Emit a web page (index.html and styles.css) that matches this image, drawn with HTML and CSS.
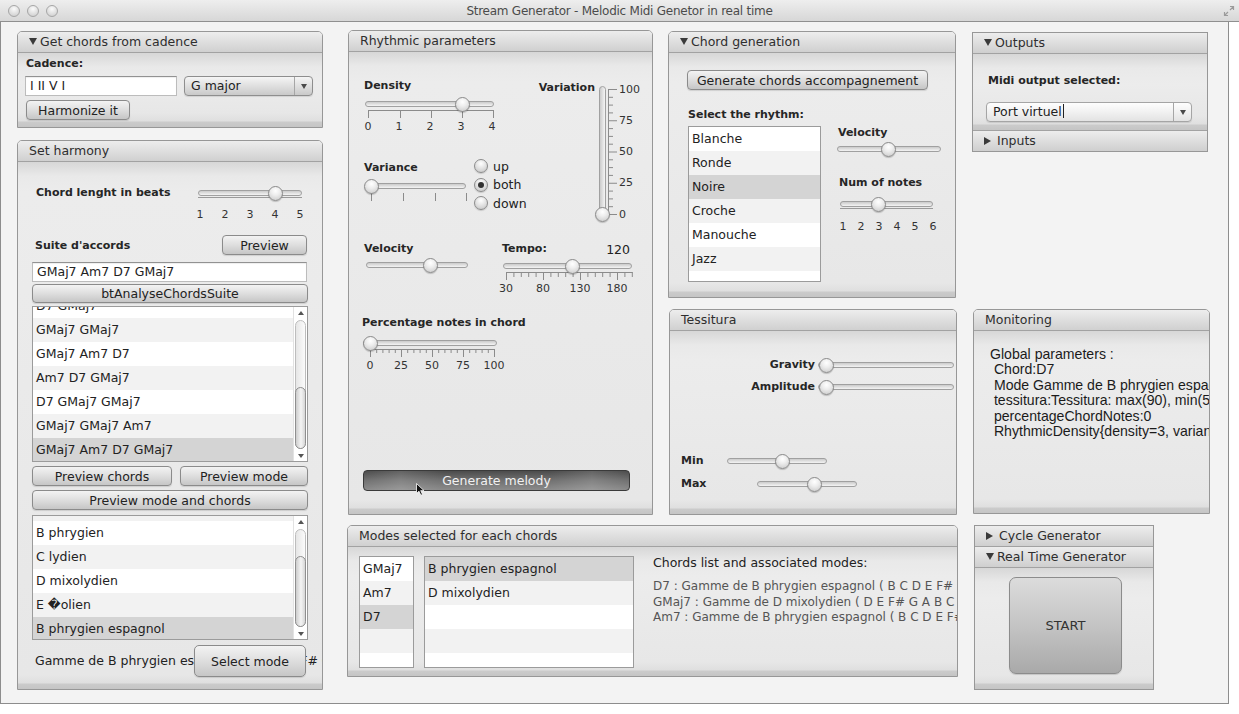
FILE: index.html
```html
<!DOCTYPE html>
<html>
<head>
<meta charset="utf-8">
<title>Stream Generator</title>
<link rel="stylesheet" href="styles.css">
</head>
<body>
<div class="titlebar">
  <div class="lights"><span class="light"></span><span class="light"></span><span class="light"></span></div>
  <div class="title">Stream Generator - Melodic Midi Genetor in real time</div>
  <div class="fs"><svg width="12" height="12" viewBox="0 0 12 12"><path d="M7 1.5h3.5V5M10.5 1.5L7 5M5 10.5H1.5V7M1.5 10.5L5 7" fill="none" stroke="#9b9b9b" stroke-width="1.2"/></svg></div>
</div>
<div class="window">
  <!-- column 1 -->
  <div class="col col1">
    <div class="panel p-cadence">
      <div class="phead"><span class="tri-down"></span>Get chords from cadence</div>
      <div class="pbody">
        <div class="lbl cad-lbl">Cadence:</div>
        <div class="cad-row">
          <div class="field cad-field">I II V I</div>
          <div class="combo cad-combo"><span class="combo-text">G major</span><span class="combo-arrow"><i></i></span></div>
        </div>
        <div class="btn btn-harm">Harmonize it</div>
      </div>
    </div>
    <div class="panel p-harmony">
      <div class="phead">Set harmony</div>
      <div class="pbody">
        <div class="harm-row1">
          <div class="lbl harm-lbl1">Chord lenght in beats</div>
          <div class="slider s-chordlen"><div class="track"></div><div class="subline"></div><div class="thumb" style="left:69.5px"></div></div>
        </div>
        <div class="tl tl-chordlen"><span>1</span><span>2</span><span>3</span><span>4</span><span>5</span></div>
        <div class="harm-row3">
          <div class="lbl suite-lbl">Suite d'accords</div>
          <div class="btn btn-preview">Preview</div>
        </div>
        <div class="field harm-field">GMaj7 Am7 D7 GMaj7</div>
        <div class="btn btn-analyse">btAnalyseChordsSuite</div>
        <div class="list list-suite">
          <div class="rows">
            <div class="row partial1">D7 GMaj7</div>
            <div class="row alt">GMaj7 GMaj7</div>
            <div class="row">GMaj7 Am7 D7</div>
            <div class="row alt">Am7 D7 GMaj7</div>
            <div class="row">D7 GMaj7 GMaj7</div>
            <div class="row alt">GMaj7 GMaj7 Am7</div>
            <div class="row sel">GMaj7 Am7 D7 GMaj7</div>
          </div>
          <div class="vscroll"><div class="sc-up"><i></i></div><div class="sc-track track1"><div class="sc-thumb thumb1"></div></div><div class="sc-down"><i></i></div></div>
        </div>
        <div class="btn-row">
          <div class="btn btn-pc">Preview chords</div>
          <div class="btn btn-pm">Preview mode</div>
        </div>
        <div class="btn btn-pmc">Preview mode and chords</div>
        <div class="list list-modes">
          <div class="rows">
            <div class="row alt partial2"></div>
            <div class="row">B phrygien</div>
            <div class="row alt">C lydien</div>
            <div class="row">D mixolydien</div>
            <div class="row alt">E �olien</div>
            <div class="row sel">B phrygien espagnol</div>
          </div>
          <div class="vscroll"><div class="sc-up"><i></i></div><div class="sc-track track2"><div class="sc-thumb thumb2"></div></div><div class="sc-down"><i></i></div></div>
        </div>
        <div class="sel-row">
          <div class="sel-text">Gamme de B phrygien espagnol ( B C D E F# G A )</div>
          <div class="btn btn-selmode">Select mode</div>
        </div>
      </div>
    </div>
  </div>

  <!-- column 2 -->
  <div class="col col2">
    <div class="mid-top">
      <div class="panel p-rhythm">
        <div class="phead">Rhythmic parameters</div>
        <div class="pbody">
          <div class="rh-top">
            <div class="rh-left">
              <div class="lbl">Density</div>
              <div class="slider s-density"><div class="track"></div><div class="thumb" style="left:89.5px"></div></div>
              <svg class="ticks t-density" width="130" height="8"><path d="M3 0.5H129M3.5 0V8M35.5 0V8M66.5 0V8M97.5 0V8M128.5 0V8" stroke="#8b8b8b" stroke-width="1" fill="none"/></svg>
              <div class="tl tl-density"><span>0</span><span>1</span><span>2</span><span>3</span><span>4</span></div>
              <div class="var-row">
                <div class="var-col">
                  <div class="lbl">Variance</div>
                  <div class="slider s-variance"><div class="track"></div><div class="thumb" style="left:-1.5px"></div></div>
                  <svg class="ticks t-variance" width="103" height="8"><path d="M6.5 0V8M38.5 0V8M70.5 0V8M101.5 0V8" stroke="#8b8b8b" stroke-width="1" fill="none"/></svg>
                </div>
                <div class="radios">
                  <div class="radio-row"><span class="radio"></span><span>up</span></div>
                  <div class="radio-row"><span class="radio on"></span><span>both</span></div>
                  <div class="radio-row"><span class="radio"></span><span>down</span></div>
                </div>
              </div>
            </div>
            <div class="rh-right">
              <div class="lbl var-lbl">Variation</div>
              <div class="vslider"><div class="vtrack"></div><div class="thumb vthumb"></div></div>
              <svg class="vticks" width="11" height="133"><path d="M1.5 3V129M1 3.5H10M1 34.75H10M1 66H10M1 97.25H10M1 128.5H10M1 11.3H6M1 19.1H6M1 26.9H6M1 42.6H6M1 50.4H6M1 58.2H6M1 73.8H6M1 81.6H6M1 89.4H6M1 105.1H6M1 112.9H6M1 120.7H6" stroke="#8b8b8b" stroke-width="1" fill="none"/></svg>
              <div class="vlabels"><span>100</span><span>75</span><span>50</span><span>25</span><span>0</span></div>
            </div>
          </div>
          <div class="rh-b">
            <div class="vel-col">
              <div class="lbl">Velocity</div>
              <div class="slider s-rvel"><div class="track"></div><div class="thumb" style="left:56.5px"></div></div>
            </div>
            <div class="tempo-col">
              <div class="tempo-head"><span class="lbl">Tempo:</span><span class="tempo-val">120</span></div>
              <div class="slider s-tempo"><div class="track"></div><div class="thumb" style="left:61.5px"></div></div>
              <svg class="ticks t-tempo" width="131" height="8"><path d="M3.5 0.5H129.5M3.5 0V8M40.5 0V8M77.5 0V8M114.5 0V8M10.9 0V5M18.3 0V5M25.7 0V5M33.1 0V5M47.9 0V5M55.3 0V5M62.7 0V5M70.1 0V5M84.9 0V5M92.3 0V5M99.7 0V5M107.1 0V5M121.9 0V5M129.3 0V5" stroke="#8b8b8b" stroke-width="1" fill="none"/></svg>
              <div class="tl tl-tempo"><span>30</span><span>80</span><span>130</span><span>180</span></div>
            </div>
          </div>
          <div class="rh-c">
            <div class="lbl pct-lbl">Percentage notes in chord</div>
            <div class="slider s-pct"><div class="track"></div><div class="thumb" style="left:-0.5px"></div></div>
            <svg class="ticks t-pct" width="136" height="8"><path d="M7.5 0.5H131.5M7.5 0V8M38.5 0V8M69.5 0V8M100.5 0V8M131.5 0V8M13.7 0V4M19.9 0V4M26.1 0V4M32.3 0V4M44.7 0V4M50.9 0V4M57.1 0V4M63.3 0V4M75.7 0V4M81.9 0V4M88.1 0V4M94.3 0V4M106.7 0V4M112.9 0V4M119.1 0V4M125.3 0V4" stroke="#8b8b8b" stroke-width="1" fill="none"/></svg>
            <div class="tl tl-pct"><span>0</span><span>25</span><span>50</span><span>75</span><span>100</span></div>
          </div>
          <div class="btn-gen">Generate melody
            <svg class="cursor" width="9" height="13" viewBox="0 0 9 13"><path d="M0.5 0.5V10.5L3 8.2L4.8 12.2L6.5 11.5L4.7 7.6H8Z" fill="#111" stroke="#fff" stroke-width="0.8"/></svg>
          </div>
        </div>
      </div>
      <div class="mid-right">
        <div class="panel p-chordgen">
          <div class="phead"><span class="tri-down"></span>Chord generation</div>
          <div class="pbody">
            <div class="btn btn-genchords">Generate chords accompagnement</div>
            <div class="cg-row">
              <div class="cg-left">
                <div class="lbl">Select the rhythm:</div>
                <div class="list list-rhythm">
                  <div class="rows">
                    <div class="row">Blanche</div>
                    <div class="row alt">Ronde</div>
                    <div class="row sel">Noire</div>
                    <div class="row alt">Croche</div>
                    <div class="row">Manouche</div>
                    <div class="row alt">Jazz</div>
                    <div class="row"></div>
                  </div>
                </div>
              </div>
              <div class="cg-right">
                <div class="lbl cg-vel">Velocity</div>
                <div class="slider s-cvel"><div class="track"></div><div class="thumb" style="left:43.5px"></div></div>
                <div class="lbl cg-num">Num of notes</div>
                <div class="slider s-num"><div class="track"></div><div class="subline"></div><div class="thumb" style="left:30.5px"></div></div>
                <div class="tl tl-num"><span>1</span><span>2</span><span>3</span><span>4</span><span>5</span><span>6</span></div>
              </div>
            </div>
          </div>
        </div>
        <div class="panel p-tess">
          <div class="phead">Tessitura</div>
          <div class="pbody">
            <div class="tess-row tr1">
              <div class="lbl tess-lbl">Gravity</div>
              <div class="slider s-grav"><div class="track"></div><div class="thumb" style="left:0.5px"></div></div>
            </div>
            <div class="tess-row tr2">
              <div class="lbl tess-lbl">Amplitude</div>
              <div class="slider s-grav"><div class="track"></div><div class="thumb" style="left:0.5px"></div></div>
            </div>
            <div class="tess-row tr3">
              <div class="lbl min-lbl">Min</div>
              <div class="slider s-mm"><div class="track"></div><div class="thumb" style="left:47.5px"></div></div>
            </div>
            <div class="tess-row tr4">
              <div class="lbl max-lbl">Max</div>
              <div class="slider s-mm"><div class="track"></div><div class="thumb" style="left:49.5px"></div></div>
            </div>
          </div>
        </div>
      </div>
    </div>
    <div class="panel p-modes">
      <div class="phead">Modes selected for each chords</div>
      <div class="pbody">
        <div class="modes-row">
          <div class="list list-chords">
            <div class="rows">
              <div class="row">GMaj7</div>
              <div class="row alt">Am7</div>
              <div class="row sel">D7</div>
              <div class="row alt"></div>
              <div class="row"></div>
            </div>
          </div>
          <div class="list list-modesel">
            <div class="rows">
              <div class="row sel">B phrygien espagnol</div>
              <div class="row alt">D mixolydien</div>
              <div class="row"></div>
              <div class="row alt"></div>
              <div class="row"></div>
            </div>
          </div>
          <div class="modes-text">
            <div class="mt-title">Chords list and associated modes:</div>
            <div class="mt-lines">D7 : Gamme de B phrygien espagnol ( B C D E F# G A )<br>GMaj7 : Gamme de D mixolydien ( D E F# G A B C )<br>Am7 : Gamme de B phrygien espagnol ( B C D E F# G A )</div>
          </div>
        </div>
      </div>
    </div>
  </div>

  <!-- column 3 -->
  <div class="col col3">
    <div class="stack stack-out">
      <div class="shead"><span class="tri-down"></span>Outputs</div>
      <div class="sbody out-body">
        <div class="lbl out-lbl">Midi output selected:</div>
        <div class="combo light out-combo"><span class="combo-text">Port virtuel<span class="caret"></span></span><span class="combo-arrow"><i></i></span></div>
      </div>
      <div class="shead last"><span class="tri-right"></span>Inputs</div>
    </div>
    <div class="panel p-monitor">
      <div class="phead">Monitoring</div>
      <div class="pbody">
        <div class="mon-text">Global parameters :
 Chord:D7
 Mode Gamme de B phrygien espagnol ( B C D E F# G A )
 tessitura:Tessitura: max(90), min(50)
 percentageChordNotes:0
 RhythmicDensity{density=3, variance=0}</div>
      </div>
    </div>
    <div class="stack stack-cycle">
      <div class="shead"><span class="tri-right"></span>Cycle Generator</div>
      <div class="shead"><span class="tri-down"></span>Real Time Generator</div>
      <div class="sbody cyc-body">
        <div class="btn-start">START</div>
      </div>
    </div>
  </div>
</div>
</body>
</html>
```

FILE: styles.css
```css
*{box-sizing:border-box;margin:0;padding:0}
html,body{width:1239px;height:714px}
body{background:#fff;font-family:"DejaVu Sans","Liberation Sans",sans-serif;font-size:12.5px;color:#222;overflow:hidden}

/* title bar */
.titlebar{height:22px;display:grid;grid-template-columns:1fr auto 1fr;align-items:center;background:linear-gradient(#eeeeee,#d7d7d7);border-bottom:1px solid #8f8f8f}
.lights{display:flex;gap:7px;padding-left:8px}
.light{width:12px;height:12px;border-radius:50%;border:1px solid #a6a6a6;background:radial-gradient(circle at 50% 30%,#fbfbfb,#d8d8d8 70%,#c8c8c8)}
.title{font-size:12px;letter-spacing:-0.25px;color:#4b4b4b;white-space:nowrap}
.fs{justify-self:end;margin-right:4px;display:flex}

/* window */
.window{width:1229px;height:682px;background:#f3f3f3;border:1px solid #8d8d8d;border-top:0;display:flex;align-items:flex-start}
.col{display:flex;flex-direction:column;flex:none}
.col1{margin-left:16px;width:306px}
.col2{margin-left:24px;width:611px}
.col3{margin-left:13px;width:240px}

/* panels */
.panel{border:1px solid #979797;border-radius:5px 5px 0 0;display:flex;flex-direction:column;overflow:hidden;flex:none}
.phead{height:21px;flex:none;background:linear-gradient(#ededed,#d0d0d0);border-bottom:1px solid #a2a2a2;line-height:20px;padding-left:11px;color:#2e2e2e;white-space:nowrap}
.pbody,.sbody{flex:1;min-height:0;display:flex;flex-direction:column;position:relative;background:linear-gradient(#d7d7d7 0,#e9e9e9 14px,#ececec 30px,#e7e7e7 calc(100% - 14px),#dfdfdf calc(100% - 6px),#cbcbcb calc(100% - 5px),#c5c5c5 100%)}
.tri-down{display:inline-block;width:0;height:0;border-left:4.5px solid transparent;border-right:4.5px solid transparent;border-top:7px solid #3a3a3a;margin-right:3px;vertical-align:1px}
.tri-right{display:inline-block;width:0;height:0;border-top:4.5px solid transparent;border-bottom:4.5px solid transparent;border-left:7px solid #3a3a3a;margin-right:6px;vertical-align:0}

.stack{border:1px solid #979797;display:flex;flex-direction:column;flex:none;overflow:hidden}
.shead{height:21px;flex:none;background:linear-gradient(#ededed,#cfcfcf);border-bottom:1px solid #a2a2a2;line-height:20px;padding-left:11px;color:#2e2e2e;white-space:nowrap}
.shead.last{border-bottom:0;border-top:1px solid #a2a2a2;height:21px}

/* common widgets */
.lbl{font-weight:bold;font-size:11px;line-height:14px;color:#262626;white-space:nowrap}
.btn{display:flex;align-items:center;justify-content:center;height:20px;border:1px solid #8b8b8b;border-radius:4px;background:linear-gradient(#f3f3f3,#dedede 50%,#c6c6c6);box-shadow:0 1px 1px rgba(0,0,0,.12);color:#222;white-space:nowrap;flex:none}
.field{height:20px;background:#fff;border:1px solid #bcbcbc;border-top-color:#929292;box-shadow:inset 0 1px 1px rgba(0,0,0,.07);padding-left:4px;line-height:18px;white-space:nowrap;overflow:hidden;flex:none}
.combo{display:flex;height:20px;border:1px solid #8e8e8e;border-radius:4px;background:linear-gradient(#f5f5f5,#dddddd 55%,#c9c9c9);overflow:hidden;flex:none;box-shadow:0 1px 1px rgba(0,0,0,.1)}
.combo.light{background:linear-gradient(#fefefe,#f1f1f1 50%,#e3e3e3);border-color:#a5a5a5}
.combo-text{flex:1;padding-left:6px;line-height:18px;white-space:nowrap}
.combo-arrow{width:18px;border-left:1px solid #a6a6a6;display:flex;align-items:center;justify-content:center}
.combo-arrow i{width:0;height:0;border-left:3.5px solid transparent;border-right:3.5px solid transparent;border-top:5px solid #4a4a4a}
.caret{display:inline-block;width:1px;height:14px;background:#222;vertical-align:-2px;margin-left:1px}

.slider{position:relative;height:12px;flex:none}
.track{height:6px;margin-top:3px;border:1px solid #a0a0a0;border-radius:3px;background:linear-gradient(#cbcbcb,#f4f4f4)}
.subline{height:1px;margin-top:1px;background:#9a9a9a}
.thumb{position:absolute;top:-1.5px;width:15px;height:15px;border-radius:50%;border:1px solid #8a8a8a;background:radial-gradient(circle at 50% 30%,#ffffff 0,#ededed 40%,#c6c6c6 100%);box-shadow:0 1px 1px rgba(0,0,0,.2)}
.ticks{display:block;flex:none}
.tl{display:flex;font-size:11px;line-height:13px;color:#333;flex:none}
.tl span{text-align:center;flex:none}

.list{display:flex;border:1px solid #9b9b9b;background:#fff;overflow:hidden;flex:none}
.rows{flex:1;min-width:0;overflow:hidden}
.row{height:24px;line-height:24px;padding-left:3px;white-space:nowrap;background:#fff}
.row.alt{background:#f2f2f2}
.row.sel{background:#d4d4d4}
.vscroll{width:14px;flex:none;display:flex;flex-direction:column;background:#fff;border-left:1px solid #e2e2e2}
.sc-up,.sc-down{height:11px;flex:none;display:flex;align-items:center;justify-content:center}
.sc-up i{width:0;height:0;border-left:3.5px solid transparent;border-right:3.5px solid transparent;border-bottom:4px solid #555}
.sc-down i{width:0;height:0;border-left:3.5px solid transparent;border-right:3.5px solid transparent;border-top:4px solid #555}
.sc-track{flex:1;margin:2px 1px 1px;border:1px solid #bdbdbd;border-radius:6px;background:linear-gradient(90deg,#e6e6e6,#fbfbfb);display:flex;flex-direction:column;justify-content:flex-end}
.sc-thumb{border:1px solid #8f8f8f;border-radius:6px;background:linear-gradient(90deg,#cdcdcd,#f4f4f4 55%,#d6d6d6);margin:0 -1px -1px}
.thumb1{height:62px}
.thumb2{height:71px}

/* cadence */
.p-cadence{margin-top:9px;height:97px}
.cad-lbl{margin-top:4px;margin-left:8px}
.cad-row{display:flex;margin-top:5px;margin-left:7px}
.cad-field{width:152px}
.cad-combo{width:129px;margin-left:7px}
.btn-harm{margin-top:4px;margin-left:8px;width:104px}

/* harmony */
.p-harmony{margin-top:12px;height:550px}
.harm-row1{display:flex;align-items:flex-start;margin-top:24px}
.harm-lbl1{margin-left:18px;width:162px}
.s-chordlen{width:104px;margin-top:1px}
.tl-chordlen{margin-top:7.5px;margin-left:172px;gap:5px}
.tl-chordlen span{width:20px}
.harm-row3{display:flex;align-items:flex-start;margin-top:14.5px}
.suite-lbl{margin-left:17px;margin-top:4px}
.btn-preview{margin-left:auto;margin-right:15px;width:85px}
.harm-field{margin-top:7px;margin-left:14px;width:275px}
.btn-analyse{margin-top:2px;margin-left:14px;width:276px;height:19px}
.list-suite{margin-top:3px;margin-left:14px;width:276px;height:156px}
.partial1{margin-top:-13px}
.partial2{margin-top:-19px}
.btn-row{display:flex;gap:8px;margin-top:4px;margin-left:14px}
.btn-pc{width:140px}
.btn-pm{width:128px}
.btn-pmc{margin-top:4px;margin-left:14px;width:276px}
.list-modes{margin-top:5px;margin-left:14px;width:276px;height:125px}
.sel-row{position:relative;margin-top:5px;height:32px;flex:none}
.sel-text{line-height:32px;padding-left:17px;white-space:nowrap}
.btn-selmode{position:absolute;left:176px;top:0;width:112px;height:32px;border-radius:5px}

/* middle */
.mid-top{display:flex;align-items:flex-start}
.p-rhythm{margin-top:8px;margin-left:1px;width:305px;height:485px}
.rh-top{display:flex;align-items:flex-start;margin-top:27px;height:151px;flex:none}
.rh-left{margin-left:15px;width:166px;display:flex;flex-direction:column}
.s-density{margin-top:5px;margin-left:1px;width:129px}
.t-density{margin-left:1px}
.tl-density{margin-top:1.5px;margin-left:-6px;gap:11px}
.tl-density span{width:20px}
.var-row{display:flex;align-items:flex-start;margin-top:28.5px}
.var-col{width:103px;display:flex;flex-direction:column}
.s-variance{margin-top:5px;margin-left:1px;width:101px}
.t-variance{margin-left:1px;margin-top:1px}
.radios{margin-left:7px;margin-top:-4.25px;display:flex;flex-direction:column}
.radio-row{height:18.5px;display:flex;align-items:center;white-space:nowrap}
.radio{width:14px;height:14px;border-radius:50%;border:1px solid #8c8c8c;background:radial-gradient(circle at 50% 30%,#ffffff,#e4e4e4 45%,#c2c2c2);margin-right:5px;display:flex;align-items:center;justify-content:center;box-shadow:0 1px 1px rgba(0,0,0,.15)}
.radio.on::after{content:"";width:6px;height:6px;border-radius:50%;background:#333}
.rh-right{margin-left:5px;display:flex;align-items:flex-start}
.var-lbl{width:60px;text-align:right;margin-top:2px}
.vslider{position:relative;width:7px;height:131px;margin-left:4px;margin-top:7px}
.vtrack{width:7px;height:131px;border:1px solid #a0a0a0;border-radius:4px;background:linear-gradient(90deg,#cbcbcb,#f4f4f4)}
.vthumb{left:-4px;top:120.5px}
.vticks{display:block;margin-left:1px;margin-top:7px}
.vlabels{margin-left:1px;margin-top:3.5px;height:138px;display:flex;flex-direction:column;justify-content:space-between;font-size:11px;line-height:13px;color:#333}
.rh-b{display:flex;align-items:flex-start;margin-top:12px}
.vel-col{margin-left:15px;width:104px;display:flex;flex-direction:column}
.s-rvel{margin-top:3px;margin-left:2px;width:102px}
.tempo-col{margin-left:34px;width:131px;display:flex;flex-direction:column}
.tempo-head{display:flex;justify-content:space-between;width:128px;line-height:14px}
.tempo-val{font-size:12.5px;line-height:14px;margin-top:1px}
.s-tempo{margin-top:3px;margin-left:1px;width:129px}
.t-tempo{margin-left:1px}
.tl-tempo{margin-top:1.5px;margin-left:-11px;gap:7px}
.tl-tempo span{width:30px}
.rh-c{display:flex;flex-direction:column;margin-top:21.5px}
.pct-lbl{margin-left:13px}
.s-pct{margin-top:7px;margin-left:14px;width:134px}
.t-pct{margin-left:14px}
.tl-pct{margin-top:1.5px;margin-left:6px;gap:1px}
.tl-pct span{width:30px}
.btn-gen{position:relative;margin-top:auto;margin-bottom:23px;margin-left:14px;width:267px;height:21px;border:1px solid #3a3a3a;border-radius:4px;display:flex;align-items:center;justify-content:center;color:#f1f1f1;flex:none;background:linear-gradient(90deg,rgba(255,255,255,0) 0,rgba(255,255,255,.13) 14%,rgba(255,255,255,0) 30%,rgba(255,255,255,0) 70%,rgba(255,255,255,.13) 86%,rgba(255,255,255,0) 100%),linear-gradient(#4c4c4c,#717171 50%,#8b8b8b)}
.cursor{position:absolute;left:52px;top:12px}

.mid-right{margin-left:15px;width:289px;display:flex;flex-direction:column}
.p-chordgen{margin-top:9px;width:288px;height:267px}
.btn-genchords{margin-top:17px;margin-left:18px;width:241px}
.cg-row{display:flex;align-items:flex-start;margin-top:18px}
.cg-left{margin-left:19px;display:flex;flex-direction:column}
.list-rhythm{margin-top:4px;width:133px;height:156px}
.cg-right{margin-left:16px;margin-top:18px;display:flex;flex-direction:column}
.cg-vel{margin-left:1px}
.s-cvel{margin-top:3px;width:104px}
.cg-num{margin-top:21px;margin-left:2px}
.s-num{margin-top:8px;margin-left:3px;width:93px}
.tl-num{margin-top:9.5px;margin-left:-3px}
.tl-num span{width:18px}

.p-tess{margin-top:11px;margin-left:1px;width:288px;height:206px}
.tess-row{display:flex;align-items:center;height:14px;flex:none}
.tr1{margin-top:27px}
.tr2{margin-top:8px}
.tr3{margin-top:60px}
.tr4{margin-top:9px}
.tess-lbl{width:145px;text-align:right}
.s-grav{margin-left:3px;width:136px}
.min-lbl{margin-left:11px;width:46px}
.max-lbl{margin-left:11px;width:76px}
.s-mm{width:100px}

.p-modes{margin-top:10px;width:611px;height:152px}
.modes-row{display:flex;align-items:flex-start;margin-top:9px}
.list-chords{margin-left:11px;width:55px;height:112px}
.list-modesel{margin-left:10px;width:210px;height:112px}
.modes-text{margin-left:19px;margin-top:-1px;white-space:nowrap;flex:none}
.mt-title{line-height:16px;color:#222}
.mt-lines{margin-top:8.3px;font-size:12px;line-height:15.3px;color:#555}

/* right column */
.stack-out{margin-top:10px;margin-left:1px;width:236px}
.out-body{height:76px;flex:none}
.out-lbl{margin-top:20px;margin-left:15px}
.out-combo{margin-top:14px;margin-left:13px;width:206px}
.p-monitor{margin-top:157px;margin-left:2px;width:237px;height:205px}
.mon-text{margin-top:16px;padding-left:16px;white-space:pre;font-family:"Liberation Sans",Arial,sans-serif;font-size:14.1px;line-height:15.4px;color:#1b1b1b}
.stack-cycle{margin-top:11px;margin-left:3px;width:180px;height:165px}
.btn-start{margin-top:9px;margin-left:34px;width:113px;height:97px;border:1px solid #8c8c8c;border-radius:7px;background:linear-gradient(#dcdcdc,#c4c4c4 50%,#a9a9a9);display:flex;align-items:center;justify-content:center;font-size:13px;color:#333;flex:none;box-shadow:0 1px 1px rgba(0,0,0,.15)}
```
